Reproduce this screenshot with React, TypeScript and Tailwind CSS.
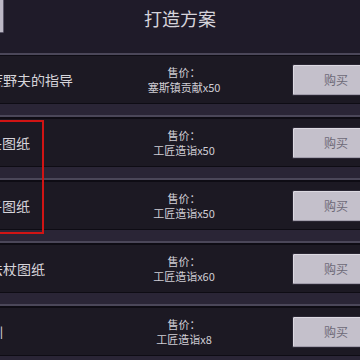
import React from "react";

const rows = [
  { name: "荒野夫的指导", price: "塞斯镇贡献x50", ml: "-ml-[11px]" },
  { name: "钻头图纸", price: "工匠造诣x50", ml: "-ml-[26px]" },
  { name: "锯子图纸", price: "工匠造诣x50", ml: "-ml-[26px]" },
  { name: "法杖图纸", price: "工匠造诣x60", ml: "-ml-[11px]" },
  { name: "铁剑", price: "工匠造诣x8", ml: "-ml-[25px]" },
];

function Sep() {
  return (
    <div className="flex flex-col">
      <div className="h-[1px] bg-[#0e0c14]" />
      <div className="h-[11px] bg-[#2a2536]" />
      <div className="h-[2px] bg-[#4b4759]" />
      <div className="h-[2px] bg-[#0e0c14]" />
    </div>
  );
}

function Row({ name, price, ml }: { name: string; price: string; ml: string }) {
  return (
    <div className="flex h-[47px] items-center bg-[#1c1923]">
      <div className="flex-1 min-w-0 overflow-hidden">
        <div className={`${ml} whitespace-nowrap text-[14px] leading-none text-[#d6d4da]`}>{name}</div>
      </div>
      <div className="w-[120px] flex flex-col items-center text-[11px] leading-[15px] text-[#d0ced5]">
        <div>售价：</div>
        <div>{price}</div>
      </div>
      <div className="ml-[48px] mr-[-20px] w-[88px] h-[32px] shrink-0 rounded-[2px] border border-[#2a2633] bg-[#c4c0cb] shadow-[inset_1px_1px_0_#dcd9e1,inset_-1px_-1px_0_#a19dab] flex items-center justify-center text-[12px] text-[#6d6977]">
        购买
      </div>
    </div>
  );
}

export default function App() {
  return (
    <div
      className="w-[360px] h-[360px] overflow-hidden bg-[#1c1923]"
      style={{ fontFamily: '"Noto Sans CJK SC", "Noto Sans", sans-serif' }}
    >
      <div className="relative h-[53px] bg-[#1f1b29] flex items-center justify-center">
        <div className="absolute left-0 top-0 w-[4px] h-[33px] bg-[#bcb8c5] border-r border-b border-[#5a5668] rounded-br-[2px]" />
        <div className="text-[18px] text-[#d6d4db] -mt-[17px]">打造方案</div>
      </div>
      <div className="h-[2px] bg-[#4b4759]" />
      <div className="h-[1px] bg-[#0e0c14]" />
      <div className="relative">
        {rows.map((r, i) => (
          <React.Fragment key={i}>
            <Row {...r} />
            <Sep />
          </React.Fragment>
        ))}
        <div className="absolute left-[-10px] top-[64px] w-[54px] h-[114px] border-2 border-[#d01414]" />
      </div>
    </div>
  );
}
